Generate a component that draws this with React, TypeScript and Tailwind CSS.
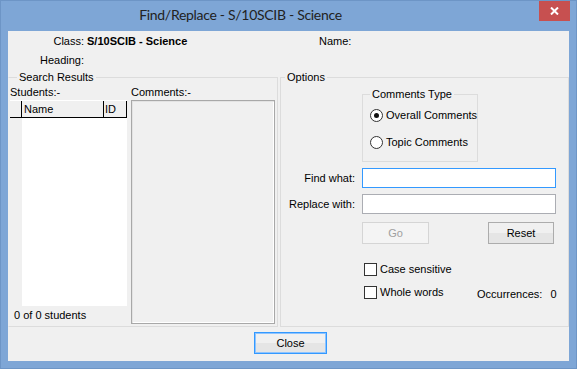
import React from "react";

const btnBg =
  "bg-[linear-gradient(#f0f0f0_0%,#f0f0f0_50%,#e5e5e5_50%,#e5e5e5_100%)]";

function Radio({ checked, label }: { checked?: boolean; label: string }) {
  return (
    <div className="flex items-center h-[13px] whitespace-nowrap">
      <div className="w-[13px] h-[13px] shrink-0 rounded-full border border-[#333] bg-white flex items-center justify-center">
        {checked && <div className="w-[5px] h-[5px] rounded-full bg-[#111]" />}
      </div>
      <span className="ml-[3px]">{label}</span>
    </div>
  );
}

function Check({ label }: { label: string }) {
  return (
    <div className="flex items-center h-[13px] whitespace-nowrap">
      <div className="w-[13px] h-[13px] shrink-0 border border-[#333] bg-white" />
      <span className="ml-[3px]">{label}</span>
    </div>
  );
}

export default function App() {
  return (
    <div className="w-[577px] h-[369px] bg-[#7ea6d6] border border-[#6d95c6] flex flex-col font-['Liberation_Sans',Arial,sans-serif] text-[11px] leading-[13px] text-black">
      {/* Title bar */}
      <div className="relative h-[30px] flex items-center justify-center pr-[96px] pb-[3px]">
        <span className="font-['Lato',sans-serif] text-[14px] tracking-[-0.3px] text-[#222] whitespace-nowrap">
          Find/Replace - S/10SCIB - Science
        </span>
        <div className="absolute right-[6px] top-0 w-[31px] h-[20px] bg-[#c75050] flex items-center justify-center">
          <svg width="9" height="8" viewBox="0 0 9 8">
            <path d="M1 0.5 L8 7.5 M8 0.5 L1 7.5" stroke="#fff" strokeWidth="2" />
          </svg>
        </div>
      </div>

      {/* Client area */}
      <div className="mx-[7px] h-[330px] bg-[#f0f0f0] flex flex-col">
        {/* Header */}
        <div className="h-[40px] pt-[4px]">
          <div className="flex h-[13px]">
            <span className="w-[76px] text-right">Class:</span>
            <span className="ml-[3px] w-[232px] font-bold">S/10SCIB - Science</span>
            <span>Name:</span>
          </div>
          <div className="flex h-[13px] mt-[6px]">
            <span className="w-[76px] text-right">Heading:</span>
          </div>
        </div>

        {/* Groups */}
        <div className="flex h-[256px] gap-[2px]">
          {/* Search Results */}
          <fieldset className="w-[270px] h-[256px] border border-[#dcdcdc] border-l-transparent">
            <legend className="ml-[8px] px-[2px] leading-[13px]">Search Results</legend>
            <div className="flex pt-[2px] pl-[1px]">
              <div className="w-[117px] flex flex-col">
                <div className="h-[13px]">Students:-</div>
                <div className="mt-[1px] h-[206px] flex flex-col">
                  <div className="h-[18px] flex border-t border-white border-b border-b-black bg-[#f0f0f0]">
                    <div className="w-[12px] border-r border-black" />
                    <div className="w-[82px] border-r border-black pl-[2px] flex items-center">Name</div>
                    <div className="flex-1 border-r border-black pl-[1px] flex items-center">ID</div>
                  </div>
                  <div className="flex flex-1">
                    <div className="w-[12px] bg-[#f0f0f0]" />
                    <div className="flex-1 bg-white" />
                  </div>
                </div>
                <div className="mt-[3px] pl-[4px] h-[13px]">0 of 0 students</div>
              </div>
              <div className="ml-[4px] w-[144px] flex flex-col">
                <div className="h-[13px]">Comments:-</div>
                <div className="mt-[1px] h-[224px] border border-[#a8a8a8] shadow-[inset_1px_1px_0_#e3e3e3,inset_-1px_-1px_0_#ffffff] bg-[#f0f0f0]" />
              </div>
            </div>
          </fieldset>

          {/* Options */}
          <fieldset className="flex-1 h-[256px] border border-[#dcdcdc]">
            <legend className="ml-[4px] px-[2px] leading-[13px]">Options</legend>
            <div className="flex flex-col">
              <fieldset className="mt-[4px] ml-[81px] w-[115px] h-[74px] border border-[#dcdcdc]">
                <legend className="ml-[7px] px-[2px] leading-[13px]">Comments Type</legend>
                <div className="pl-[7px] flex flex-col">
                  <div className="mt-[8px]">
                    <Radio checked label="Overall Comments" />
                  </div>
                  <div className="mt-[14px]">
                    <Radio label="Topic Comments" />
                  </div>
                </div>
              </fieldset>

              <div className="mt-[6px] flex items-center h-[20px]">
                <span className="w-[74px] text-right">Find what:</span>
                <div className="ml-[7px] w-[194px] h-[20px] border border-[#3399ff] bg-white" />
              </div>
              <div className="mt-[6px] flex items-center h-[20px]">
                <span className="w-[74px] text-right">Replace with:</span>
                <div className="ml-[7px] w-[194px] h-[20px] border border-[#abadb3] bg-white" />
              </div>

              <div className="mt-[8px] flex">
                <div className="ml-[81px] w-[67px] h-[22px] border border-[#d5d5d5] bg-[#f4f4f4] text-[#a0a0a0] flex items-center justify-center">
                  Go
                </div>
                <div className={`ml-[59px] w-[66px] h-[22px] border border-[#acacac] ${btnBg} flex items-center justify-center`}>
                  Reset
                </div>
              </div>

              <div className="mt-[19px] ml-[83px]">
                <Check label="Case sensitive" />
              </div>
              <div className="mt-[10px] ml-[83px] flex items-start">
                <div className="w-[113px]">
                  <Check label="Whole words" />
                </div>
                <div className="mt-[2px] flex whitespace-nowrap">
                  <span>Occurrences:</span>
                  <span className="ml-[8px]">0</span>
                </div>
              </div>
            </div>
          </fieldset>
        </div>

        {/* Close */}
        <div className="pt-[5px] pl-[4px] flex justify-center">
          <div className={`w-[73px] h-[22px] border border-[#3399ff] shadow-[inset_0_0_0_1px_#8ec4ff] ${btnBg} flex items-center justify-center`}>
            Close
          </div>
        </div>
      </div>
    </div>
  );
}
